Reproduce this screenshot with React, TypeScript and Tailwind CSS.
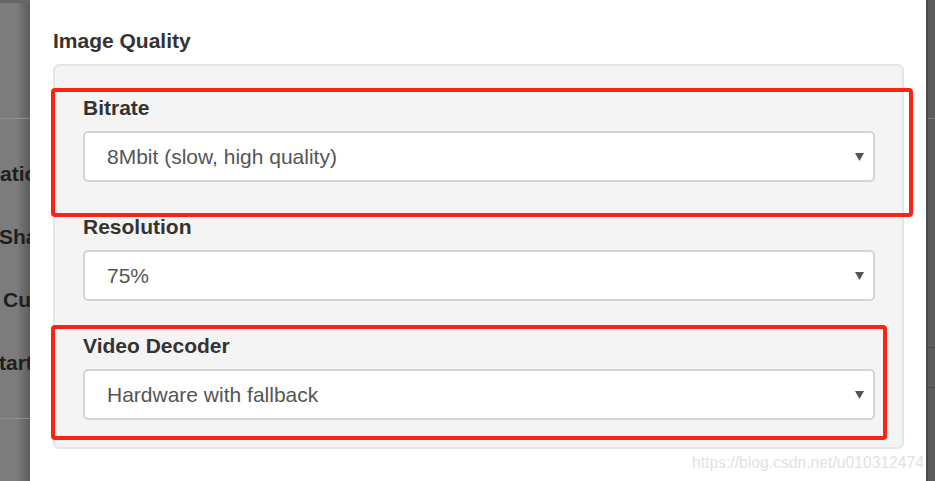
import React from "react";

const labelCls =
  "h-[30px] text-[21px] font-bold leading-[30px] text-[#333333]";

function Caret() {
  return (
    <svg width="9" height="8" viewBox="0 0 9 8" className="shrink-0">
      <path d="M0 0h9L4.5 8z" fill="#555555" />
    </svg>
  );
}

function FakeSelect({ value }: { value: string }) {
  return (
    <div className="mt-2 flex h-[51px] items-center justify-between rounded-[5px] border-2 border-[#d4d4d4] bg-white pl-[22px] pr-[9px] text-[21px] text-[#555555]">
      <span>{value}</span>
      <Caret />
    </div>
  );
}

function Field({ label, value }: { label: string; value: string }) {
  return (
    <div>
      <p className={labelCls}>{label}</p>
      <FakeSelect value={value} />
    </div>
  );
}

export default function App() {
  return (
    <div className="flex h-[481px] w-[935px] overflow-hidden bg-white font-['Liberation_Sans',Arial,sans-serif]">
      {/* page behind the backdrop, left edge */}
      <div className="flex w-[30px] shrink-0 flex-col overflow-hidden bg-linear-to-r from-[#7c7c7c] from-55% to-[#5d5d5d] text-[21px] font-bold text-[#1e1e1e]">
        <div className="h-[3px] bg-[#666666]" />
        <div className="h-[116px] border-b border-[#8c8c8c]" />
        <div className="pt-[23px]">
          <p className="h-[63px] whitespace-nowrap leading-[63px]">ation</p>
          <p className="h-[63px] -ml-px whitespace-nowrap leading-[63px]">Sha</p>
          <p className="h-[63px] whitespace-nowrap pl-[3px] leading-[63px]">Cus</p>
          <p className="h-[63px] -ml-[1px] whitespace-nowrap leading-[63px]">tart</p>
        </div>
        <div className="h-[25px] border-b border-[#8c8c8c]" />
      </div>

      {/* modal */}
      <div className="relative w-[896px] shrink-0 bg-white pl-[23px] pr-[22px] pt-[26px]">
        <h4 className={labelCls}>Image Quality</h4>
        <div className="mt-2 flex h-[385px] flex-col gap-[30px] rounded-[6px] border-2 border-[#e6e6e6] bg-[#f4f4f4] pl-[28px] pr-[27px] pt-[27px]">
          <Field label="Bitrate" value="8Mbit (slow, high quality)" />
          <Field label="Resolution" value="75%" />
          <Field label="Video Decoder" value="Hardware with fallback" />
        </div>

        {/* annotation boxes */}
        <div className="absolute left-[21px] top-[88px] h-[129px] w-[862px] rounded-[4px] border-4 border-[#fe2212]" />
        <div className="absolute left-[21px] top-[325px] h-[115px] w-[836px] rounded-[4px] border-4 border-[#fe2212]" />

        <span className="absolute left-[662px] top-[453px] whitespace-nowrap text-[15.7px] leading-[20px] text-[#e2e2e2]">
          https://blog.csdn.net/u010312474
        </span>
      </div>

      {/* page behind the backdrop, right edge */}
      <div className="flex w-[9px] shrink-0 flex-col border-l-2 border-[#4a4a4a] bg-[#5c5c5c]">
        <div className="h-[119px] border-b border-[#757575]" />
        <div className="h-[229px] border-b border-[#4c4c4c]" />
        <div className="h-[40px] border-b border-[#4c4c4c]" />
      </div>
    </div>
  );
}
